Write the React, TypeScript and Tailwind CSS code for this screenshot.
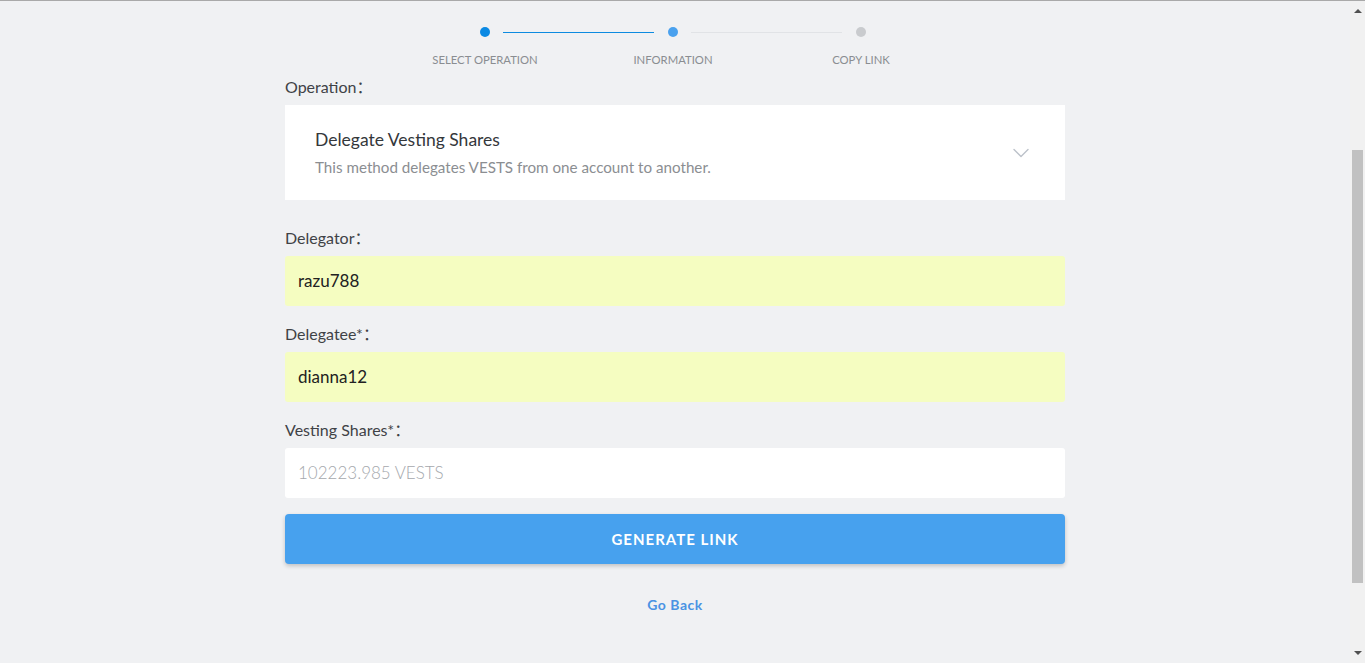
import { ChevronDown } from "lucide-react";

const font = { fontFamily: '"Lato", "Noto Sans CJK SC", sans-serif' };

function StepDots() {
  return (
    <div className="ml-[106px] w-[564px] h-[10px] flex items-center">
      <div className="w-[94px]" />
      <span className="w-[10px] h-[10px] rounded-full bg-[#0b89e3] -ml-[5px]" />
      <span className="ml-[13px] w-[151px] h-px bg-[#0d8be0]" />
      <span className="ml-[14px] w-[10px] h-[10px] rounded-full bg-[#4aa1ee]" />
      <span className="ml-[13px] w-[151px] h-px bg-[#e1e3e6]" />
      <span className="ml-[14px] w-[10px] h-[10px] rounded-full bg-[#c9cbce]" />
    </div>
  );
}

function Label({ children }: { children: React.ReactNode }) {
  return <div className="text-[16px] leading-6 text-[#3f4246] mb-[6px]">{children}</div>;
}

function Field({ value, filled, placeholder }: { value?: string; filled?: boolean; placeholder?: string }) {
  return (
    <div
      className={
        "h-[50px] rounded-[3px] px-[13px] flex items-center text-[17px] " +
        (filled ? "bg-[#f5fdc1] text-[#222]" : "bg-white text-[#a5a8ad] font-light")
      }
    >
      {value ?? placeholder}
    </div>
  );
}

export default function App() {
  return (
    <div className="h-[663px] bg-[#f0f1f3] flex flex-col overflow-hidden" style={font}>
      <div className="h-px bg-[#a9a9a9]" />
      <div className="flex flex-1">
        <main className="flex-1 flex justify-center">
          <div className="w-[780px] pt-[26px]">
            <StepDots />
            <div className="flex ml-[106px] w-[564px] text-[11.3px] leading-4 text-[#8a8d91] uppercase mt-[15px]">
              <div className="w-[188px] text-center">Select Operation</div>
              <div className="w-[188px] text-center">Information</div>
              <div className="w-[188px] text-center">Copy Link</div>
            </div>

            <div className="mt-[7px]">
              <Label>Operation：</Label>
              <div className="bg-white h-[95px] px-[30px] flex items-center justify-between">
                <div>
                  <div className="text-[17.5px] leading-6 text-[#34373b]">Delegate Vesting Shares</div>
                  <div className="text-[15.2px] leading-5 text-[#8b8e92] mt-[5px]">
                    This method delegates VESTS from one account to another.
                  </div>
                </div>
                <ChevronDown className="w-[28px] h-[28px] text-[#bcc2ca]" strokeWidth={1.2} />
              </div>
            </div>

            <div className="mt-[26px]">
              <Label>Delegator：</Label>
              <Field value="razu788" filled />
            </div>
            <div className="mt-[16px]">
              <Label>Delegatee*：</Label>
              <Field value="dianna12" filled />
            </div>
            <div className="mt-[16px]">
              <Label>Vesting Shares*：</Label>
              <Field placeholder="102223.985 VESTS" />
            </div>

            <button className="mt-[16px] w-full h-[50px] rounded-[4px] bg-[#47a1ee] text-white font-bold text-[15px] tracking-[1px] shadow-[0_2px_4px_rgba(0,0,0,0.2)]">
              GENERATE LINK
            </button>
            <div className="mt-[30px] text-center text-[14px] font-bold text-[#4a93e3] tracking-[0.5px]">Go Back</div>
          </div>
        </main>
        <div className="w-[15px] bg-[#f1f1f1] flex flex-col items-center">
          <div className="h-[20px] flex items-center justify-center">
            <span className="w-0 h-0 border-l-[4px] border-r-[4px] border-b-[4px] border-l-transparent border-r-transparent border-b-[#505050]" />
          </div>
          <div className="flex-1 w-full px-[2px] pt-[129px] pb-[60px]">
            <div className="h-[433px] bg-[#c1c1c1]" />
          </div>
          <div className="h-[20px] flex items-center justify-center">
            <span className="w-0 h-0 border-l-[4px] border-r-[4px] border-t-[4px] border-l-transparent border-r-transparent border-t-[#505050]" />
          </div>
        </div>
      </div>
    </div>
  );
}
